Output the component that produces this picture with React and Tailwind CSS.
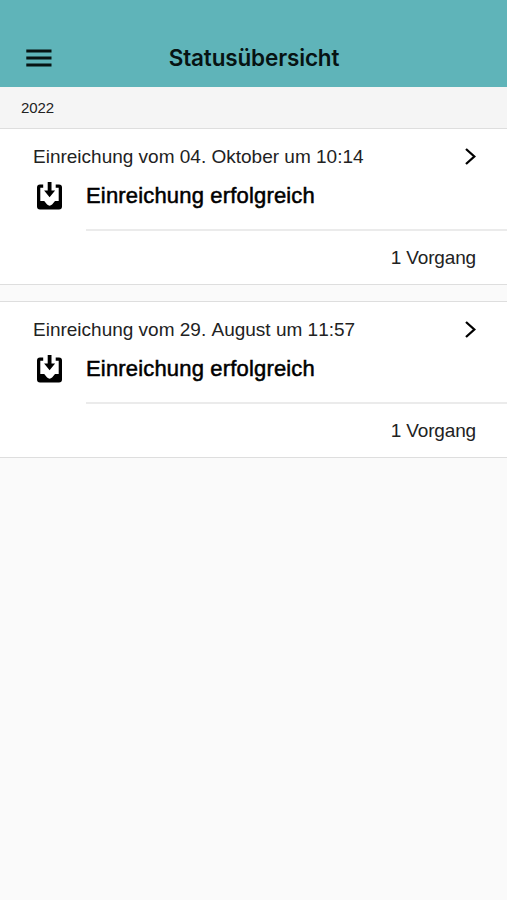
import React from 'react';

const SUBMISSIONS = [
  { id: 1, date: 'Einreichung vom 04. Oktober um 10:14', status: 'Einreichung erfolgreich', count: '1 Vorgang' },
  { id: 2, date: 'Einreichung vom 29. August um 11:57', status: 'Einreichung erfolgreich', count: '1 Vorgang' },
];

export default function App() {
  return (
    <div className="min-h-screen bg-[#fafafa] text-black font-['Liberation_Sans',Arial,sans-serif]">
      <header className="grid h-[87px] grid-cols-[64px_1fr_64px] bg-[#5fb4b9] pt-7">
        <button aria-label="Menü" className="flex items-center pl-[26px]">
          <MenuIcon />
        </button>
        <h1 className="flex items-center justify-center whitespace-nowrap pl-px font-['Inter',sans-serif] text-[22.5px] font-semibold tracking-[-0.15px] text-[#071313]">
          Statusübersicht
        </h1>
      </header>

      <div className="flex h-[41px] items-center bg-[#f5f5f5] pt-0.5 pl-[21px] text-[15px] tracking-[-0.1px] text-[#222]">2022</div>

      <main className="space-y-4">
        {SUBMISSIONS.map((item) => (
          <SubmissionCard key={item.id} item={item} />
        ))}
      </main>
    </div>
  );
}

function SubmissionCard({ item }) {
  return (
    <section className="h-[157px] border-y border-[#dedede] bg-white">
      <div className="flex h-[102px] flex-col">
        <div className="flex h-14 items-center justify-between pl-[33px] pr-[31px]">
          <span className="whitespace-nowrap pt-px text-[19px] text-[#222] [font-kerning:none]">{item.date}</span>
          <ChevronIcon />
        </div>
        <div className="-mt-2 flex items-start">
          <div className="w-[86px] pl-9 pt-[5px]">
            <InboxIcon />
          </div>
          <div className="h-[54px] flex-1 border-b-2 border-[#ebebeb] pt-[2px] text-[22px] tracking-[0.17px] [-webkit-text-stroke:0.5px_black]">
            {item.status}
          </div>
        </div>
      </div>
      <div className="flex h-[54px] items-center justify-end pr-[31px] text-[19px] tracking-[-0.15px] text-[#222]">{item.count}</div>
    </section>
  );
}

function MenuIcon() {
  return (
    <svg width="26" height="18" viewBox="0 0 26 18" fill="none" stroke="#071313" strokeWidth="2.8">
      <path d="M.3 2h25.200M.3 9h25.200M.3 16h25.200" />
    </svg>
  );
}

function ChevronIcon() {
  return (
    <svg className="mb-[2px]" width="11" height="17" viewBox="0 0 11 17" fill="none" stroke="black" strokeWidth="2.3">
      <path d="M1 1l8.300 7.500L1 16" />
    </svg>
  );
}

function InboxIcon() {
  return (
    <svg width="27" height="29" viewBox="0 0 27 29">
      <path
        d="M7.200 2.500H4a3 3 0 0 0-3 3v19a3 3 0 0 0 3 3h19a3 3 0 0 0 3-3v-19a3 3 0 0 0-3-3h-3.300v3.200h3v13.300H19l-2.900 3.600q-2.500 2.200-5 0L8.200 19H4.300V5.700h2.900z"
      />
      <path d="M11.700 0h3.800v8.500h3.600L13.600 15.200 8.100 8.500h3.600z" />
    </svg>
  );
}
